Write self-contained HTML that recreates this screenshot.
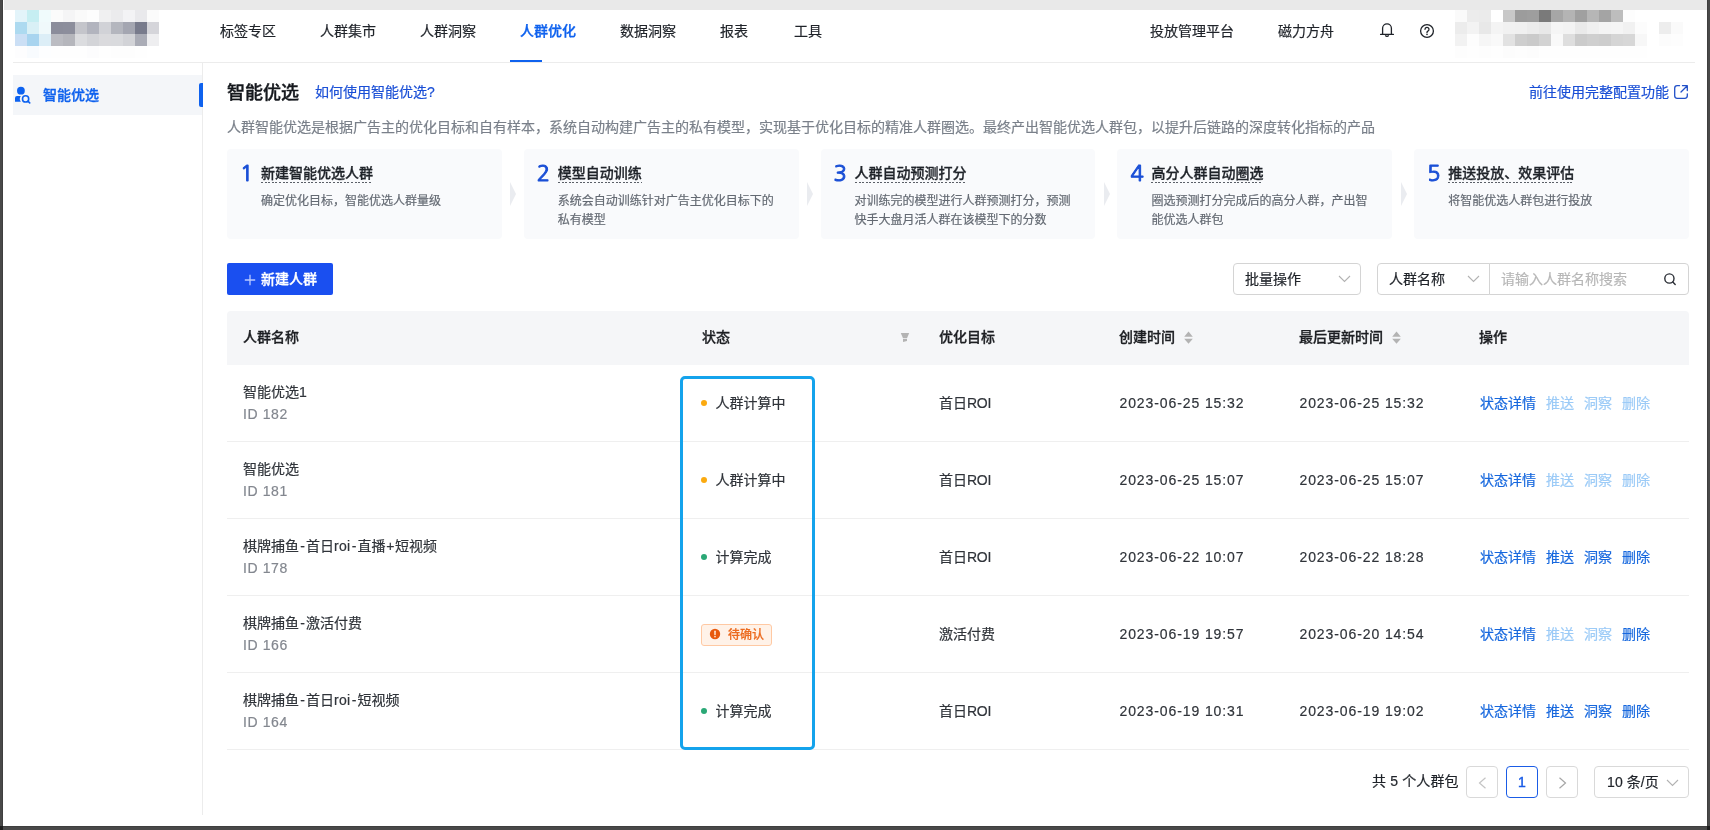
<!DOCTYPE html>
<html lang="zh-CN">
<head>
<meta charset="utf-8">
<title>智能优选</title>
<style>
*{box-sizing:border-box;margin:0;padding:0}
html,body{width:1710px;height:830px;overflow:hidden;background:#fff}
body{position:relative;font-family:"Liberation Sans","Noto Sans CJK SC",sans-serif;font-size:14px;color:#1f2329;-webkit-text-stroke-width:.2px}
.abs{position:absolute}
.t{position:absolute;white-space:nowrap;line-height:20px;height:20px}
.frame-l{left:0;top:0;width:3px;height:830px;background:linear-gradient(90deg,#494949 0,#494949 2px,#3f3f3f 2px,#3f3f3f 3px)}
.frame-r{left:1707px;top:0;width:3px;height:830px;background:linear-gradient(90deg,#3f3f3f 0,#3f3f3f 1px,#494949 1px,#494949 3px)}
.frame-b{left:0;top:826px;width:1710px;height:4px;background:linear-gradient(180deg,#3f3f3f 0,#3f3f3f 1px,#494949 1px,#494949 4px)}
.frame-c{top:826px;width:3px;height:4px;background:#1e1e1e}
.frame-t{left:4px;top:0;width:1703px;height:10px;background:#e9e9e9}
.hline{left:13px;top:62px;width:1682px;height:1px;background:#ececec}
.nav{top:21px;font-size:14px;color:#1f2329}
.nav.on{color:#0f62ee;font-weight:500;-webkit-text-stroke-width:.3px}
.px{position:absolute;width:12px;height:12px}
.side-item{left:13px;top:75px;width:189px;height:40px;background:#f4f6f9}
.side-line{left:202px;top:63px;width:1px;height:752px;background:#ececec}
.blue{color:#0f62ee}
.sb{font-weight:500;-webkit-text-stroke-width:.3px}
.card{position:absolute;top:149px;width:274.800px;height:90px;background:#f9fafc;border-radius:4px}
.card .n{position:absolute;left:13px;top:11px;font-family:"NanumGothic","Liberation Sans",sans-serif;-webkit-text-stroke:1px #1a4fd6;font-size:22px;line-height:26px;color:#1a4fd6}
.card .h{position:absolute;left:34px;top:14px;font-size:14px;line-height:20px;height:20px;font-weight:500;-webkit-text-stroke-width:.3px;color:#1f2329;white-space:nowrap;background:repeating-linear-gradient(90deg,#5b6068 0,#5b6068 2px,transparent 2px,transparent 3.600px) left bottom/100% 1px no-repeat}
.card .d{position:absolute;left:34px;top:43px;width:226px;font-size:12px;line-height:19px;color:#646a73}
.arrow{position:absolute;top:182px;width:0;height:0;border-top:12px solid transparent;border-bottom:12px solid transparent;border-left:6px solid #eaecf0}
.btn{left:227px;top:263px;width:106px;height:32px;background:#1a4ff0;border-radius:2px;color:#fff;font-weight:500;-webkit-text-stroke-width:.3px}
.sel{position:absolute;top:263px;height:32px;border:1px solid #d4d4d4;border-radius:4px;background:#fff}
.th{left:227px;top:311px;width:1462px;height:54px;background:#f5f6f8;border-radius:4px 4px 0 0}
.th .t{top:16px;font-weight:500;color:#1d1f23;-webkit-text-stroke-width:.3px}
.row{position:absolute;left:227px;width:1462px;height:77px;border-bottom:1px solid #efefef}
.row .t{color:#30343a}
.row .nm{left:16px;top:17px}
.row .id{left:16px;top:39px;color:#83878f;letter-spacing:.6px}
.row .st{left:488.500px;top:28px}
.row .dot{position:absolute;left:474px;top:35px;width:6px;height:6px;border-radius:50%}
.row .go{left:712px;top:28px}
.row .c1{left:892.500px;top:28px;letter-spacing:.9px}
.row .c2{left:1072.500px;top:28px;letter-spacing:.9px}
.row .a{top:28px;color:#1768de}
.row .a.dis{color:#9ccbf7}
.hy{margin:0 1.200px}.lt{letter-spacing:.3px}.pl{margin:0 .6px}.roi{letter-spacing:-.3px}
.hl{left:680px;top:376px;width:134.500px;height:374px;border:3px solid #14a3ec;border-radius:5px}
.pg{position:absolute;top:766px;width:32px;height:32px;border:1px solid #d9d9d9;border-radius:4px;background:#fff}
</style>
</head>
<body><div id="app" style="position:absolute;left:0;top:0;width:1710px;height:830px;will-change:transform">
<div class="abs frame-t"></div>
<div class="abs hline"></div>
<!-- pixelated logo / user -->
<div aria-hidden="true"><i class="px" style="left:15px;top:10px;background:#e3f4fa"></i><i class="px" style="left:27px;top:10px;background:#c6eef2"></i><i class="px" style="left:39px;top:10px;background:#f0fbfc"></i><i class="px" style="left:51px;top:10px;background:#fbfbfb"></i><i class="px" style="left:63px;top:10px;background:#f5f5f6"></i><i class="px" style="left:75px;top:10px;background:#fafafa"></i><i class="px" style="left:87px;top:10px;background:#fdfdfd"></i><i class="px" style="left:99px;top:10px;background:#f0f0f1"></i><i class="px" style="left:111px;top:10px;background:#ebebed"></i><i class="px" style="left:123px;top:10px;background:#f3f3f5"></i><i class="px" style="left:135px;top:10px;background:#e9e9ec"></i><i class="px" style="left:147px;top:10px;background:#fbfbfb"></i><i class="px" style="left:15px;top:22px;background:#addaf0"></i><i class="px" style="left:27px;top:22px;background:#d9f0f6"></i><i class="px" style="left:39px;top:22px;background:#f0f9fb"></i><i class="px" style="left:51px;top:22px;background:#8b8d9b"></i><i class="px" style="left:63px;top:22px;background:#8c8e9c"></i><i class="px" style="left:75px;top:22px;background:#c4c5cb"></i><i class="px" style="left:87px;top:22px;background:#b2b4be"></i><i class="px" style="left:99px;top:22px;background:#d1d2d7"></i><i class="px" style="left:111px;top:22px;background:#b4b6be"></i><i class="px" style="left:123px;top:22px;background:#a4a6b1"></i><i class="px" style="left:135px;top:22px;background:#787b8c"></i><i class="px" style="left:147px;top:22px;background:#d5d5da"></i><i class="px" style="left:15px;top:34px;background:#cbdff5"></i><i class="px" style="left:27px;top:34px;background:#a8d4ef"></i><i class="px" style="left:39px;top:34px;background:#dceef7"></i><i class="px" style="left:51px;top:34px;background:#bbbcc2"></i><i class="px" style="left:63px;top:34px;background:#b5b6bc"></i><i class="px" style="left:75px;top:34px;background:#dbdcdf"></i><i class="px" style="left:87px;top:34px;background:#d3d4d8"></i><i class="px" style="left:99px;top:34px;background:#dadadd"></i><i class="px" style="left:111px;top:34px;background:#d9dadd"></i><i class="px" style="left:123px;top:34px;background:#d2d3d7"></i><i class="px" style="left:135px;top:34px;background:#aaacb6"></i><i class="px" style="left:147px;top:34px;background:#eeeef0"></i><i class="px" style="left:15px;top:46px;background:#fdfdfe"></i><i class="px" style="left:27px;top:46px;background:#f8fbfe"></i><i class="px" style="left:39px;top:46px;background:#fdfeff"></i><i class="px" style="left:51px;top:46px;background:#fefefe"></i><i class="px" style="left:63px;top:46px;background:#fefefe"></i><i class="px" style="left:75px;top:46px;background:#fefefe"></i><i class="px" style="left:87px;top:46px;background:#fcfcfd"></i><i class="px" style="left:99px;top:46px;background:#fefefe"></i><i class="px" style="left:111px;top:46px;background:#fdfdfd"></i><i class="px" style="left:123px;top:46px;background:#fdfdfd"></i><i class="px" style="left:135px;top:46px;background:#fefefe"></i><i class="px" style="left:1455px;top:10px;background:#fafafa"></i><i class="px" style="left:1467px;top:10px;background:#ececec"></i><i class="px" style="left:1479px;top:10px;background:#ebebeb"></i><i class="px" style="left:1503px;top:10px;background:#c8c8c8"></i><i class="px" style="left:1515px;top:10px;background:#9c9c9c"></i><i class="px" style="left:1527px;top:10px;background:#9e9e9e"></i><i class="px" style="left:1539px;top:10px;background:#7a7a7a"></i><i class="px" style="left:1551px;top:10px;background:#a6a6a6"></i><i class="px" style="left:1563px;top:10px;background:#b4b4b4"></i><i class="px" style="left:1575px;top:10px;background:#a0a0a0"></i><i class="px" style="left:1587px;top:10px;background:#b6b6b6"></i><i class="px" style="left:1599px;top:10px;background:#a4a4a4"></i><i class="px" style="left:1611px;top:10px;background:#bdbdbd"></i><i class="px" style="left:1623px;top:10px;background:#fdfdfd"></i><i class="px" style="left:1455px;top:22px;background:#ececec"></i><i class="px" style="left:1467px;top:22px;background:#f3f3f3"></i><i class="px" style="left:1479px;top:22px;background:#e8e8e8"></i><i class="px" style="left:1491px;top:22px;background:#f4f4f4"></i><i class="px" style="left:1503px;top:22px;background:#f1f1f1"></i><i class="px" style="left:1515px;top:22px;background:#f0f0f0"></i><i class="px" style="left:1527px;top:22px;background:#ececec"></i><i class="px" style="left:1539px;top:22px;background:#e8e8e8"></i><i class="px" style="left:1551px;top:22px;background:#f5f5f5"></i><i class="px" style="left:1563px;top:22px;background:#f3f3f3"></i><i class="px" style="left:1575px;top:22px;background:#eaeaea"></i><i class="px" style="left:1587px;top:22px;background:#f0f0f0"></i><i class="px" style="left:1599px;top:22px;background:#f4f4f4"></i><i class="px" style="left:1611px;top:22px;background:#f5f5f5"></i><i class="px" style="left:1623px;top:22px;background:#f1f1f1"></i><i class="px" style="left:1635px;top:22px;background:#fcfcfc"></i><i class="px" style="left:1659px;top:22px;background:#ededed"></i><i class="px" style="left:1671px;top:22px;background:#fafafa"></i><i class="px" style="left:1455px;top:34px;background:#f2f2f2"></i><i class="px" style="left:1467px;top:34px;background:#fdfdfd"></i><i class="px" style="left:1479px;top:34px;background:#f6f6f6"></i><i class="px" style="left:1491px;top:34px;background:#f9f9f9"></i><i class="px" style="left:1503px;top:34px;background:#e2e2e2"></i><i class="px" style="left:1515px;top:34px;background:#cecece"></i><i class="px" style="left:1527px;top:34px;background:#cacaca"></i><i class="px" style="left:1539px;top:34px;background:#d3d3d3"></i><i class="px" style="left:1551px;top:34px;background:#f9f9f9"></i><i class="px" style="left:1563px;top:34px;background:#dedede"></i><i class="px" style="left:1575px;top:34px;background:#cbcbcb"></i><i class="px" style="left:1587px;top:34px;background:#cfcfcf"></i><i class="px" style="left:1599px;top:34px;background:#cdcdcd"></i><i class="px" style="left:1611px;top:34px;background:#d5d5d5"></i><i class="px" style="left:1623px;top:34px;background:#d7d7d7"></i><i class="px" style="left:1635px;top:34px;background:#f7f7f7"></i><i class="px" style="left:1659px;top:34px;background:#fcfcfc"></i><i class="px" style="left:1671px;top:34px;background:#fdfdfd"></i><i class="px" style="left:1455px;top:46px;background:#fdfdfd"></i><i class="px" style="left:1467px;top:46px;background:#fefefe"></i><i class="px" style="left:1479px;top:46px;background:#fdfdfd"></i><i class="px" style="left:1491px;top:46px;background:#fefefe"></i><i class="px" style="left:1503px;top:46px;background:#fcfcfc"></i><i class="px" style="left:1515px;top:46px;background:#fdfdfd"></i><i class="px" style="left:1527px;top:46px;background:#fcfcfc"></i><i class="px" style="left:1539px;top:46px;background:#fefefe"></i><i class="px" style="left:1551px;top:46px;background:#fefefe"></i><i class="px" style="left:1563px;top:46px;background:#fefefe"></i><i class="px" style="left:1575px;top:46px;background:#fefefe"></i><i class="px" style="left:1587px;top:46px;background:#fefefe"></i><i class="px" style="left:1599px;top:46px;background:#fefefe"></i><i class="px" style="left:1611px;top:46px;background:#fefefe"></i><i class="px" style="left:1623px;top:46px;background:#fefefe"></i><i class="px" style="left:1635px;top:46px;background:#fefefe"></i></div>
<!-- nav -->
<div class="t nav" style="left:220px">标签专区</div>
<div class="t nav" style="left:320px">人群集市</div>
<div class="t nav" style="left:420px">人群洞察</div>
<div class="t nav on" style="left:520px">人群优化</div>
<div class="t nav" style="left:620px">数据洞察</div>
<div class="t nav" style="left:720px">报表</div>
<div class="t nav" style="left:794px">工具</div>
<div class="abs" style="left:510px;top:60px;width:32px;height:2px;background:#0f62ee"></div>
<div class="t nav" style="left:1150px">投放管理平台</div>
<div class="t nav" style="left:1278px">磁力方舟</div>
<!-- sidebar -->
<div class="abs side-line"></div>
<div class="abs side-item"></div>
<div class="abs" style="left:199px;top:83px;width:4px;height:24px;background:#0f62ee;border-radius:2px 0 0 2px"></div>
<div class="t blue sb" style="left:43px;top:85px">智能优选</div>
<!-- title -->
<div class="t" style="left:227px;top:80px;font-size:18px;line-height:26px;height:26px;font-weight:500;-webkit-text-stroke-width:.4px;color:#15181d">智能优选</div>
<div class="t" style="left:315px;top:82px;color:#1a4fd6">如何使用智能优选?</div>
<div class="t" style="left:1529px;top:82px;color:#1a4fd6">前往使用完整配置功能</div>
<div class="t" style="left:227px;top:117px;color:#7a808a">人群智能优选是根据广告主的优化目标和自有样本，系统自动构建广告主的私有模型，实现基于优化目标的精准人群圈选。最终产出智能优选人群包，以提升后链路的深度转化指标的产品</div>
<!-- steps -->
<div class="card" style="left:227px"><span class="n">1</span><span class="h">新建智能优选人群</span><div class="d">确定优化目标，智能优选人群量级</div></div>
<div class="card" style="left:523.800px"><span class="n">2</span><span class="h">模型自动训练</span><div class="d">系统会自动训练针对广告主优化目标下的私有模型</div></div>
<div class="card" style="left:820.600px"><span class="n">3</span><span class="h">人群自动预测打分</span><div class="d">对训练完的模型进行人群预测打分，预测快手大盘月活人群在该模型下的分数</div></div>
<div class="card" style="left:1117.400px"><span class="n">4</span><span class="h">高分人群自动圈选</span><div class="d">圈选预测打分完成后的高分人群，产出智能优选人群包</div></div>
<div class="card" style="left:1414.200px"><span class="n">5</span><span class="h">推送投放、效果评估</span><div class="d">将智能优选人群包进行投放</div></div>
<div class="arrow" style="left:510px"></div>
<div class="arrow" style="left:807px"></div>
<div class="arrow" style="left:1103.800px"></div>
<div class="arrow" style="left:1400.600px"></div>
<!-- toolbar -->
<div class="abs btn"><span class="t" style="left:34px;top:6px">新建人群</span></div>
<div class="sel" style="left:1233px;width:128px"><span class="t" style="left:11px;top:5px">批量操作</span></div>
<div class="sel" style="left:1377px;width:113px;border-radius:4px 0 0 4px"><span class="t" style="left:11px;top:5px">人群名称</span></div>
<div class="sel" style="left:1489px;width:200px;border-radius:0 4px 4px 0"><span class="t" style="left:11px;top:5px;color:#b7b7b7">请输入人群名称搜索</span></div>
<!-- table head -->
<div class="abs th">
<span class="t" style="left:16px">人群名称</span>
<span class="t" style="left:475px">状态</span>
<span class="t" style="left:712px">优化目标</span>
<span class="t" style="left:892px">创建时间</span>
<span class="t" style="left:1072px">最后更新时间</span>
<span class="t" style="left:1252px">操作</span>
</div>
<!-- rows -->
<div class="row" style="top:365px"><span class="t nm">智能优选1</span><span class="t id">ID 182</span><i class="dot" style="background:#fbaa10"></i><span class="t st">人群计算中</span><span class="t go">首日<span class="roi">ROI</span></span><span class="t c1">2023-06-25 15:32</span><span class="t c2">2023-06-25 15:32</span><span class="t a" style="left:1253px">状态详情</span><span class="t a dis" style="left:1319px">推送</span><span class="t a dis" style="left:1357px">洞察</span><span class="t a dis" style="left:1395px">删除</span></div>
<div class="row" style="top:442px"><span class="t nm">智能优选</span><span class="t id">ID 181</span><i class="dot" style="background:#fbaa10"></i><span class="t st">人群计算中</span><span class="t go">首日<span class="roi">ROI</span></span><span class="t c1">2023-06-25 15:07</span><span class="t c2">2023-06-25 15:07</span><span class="t a" style="left:1253px">状态详情</span><span class="t a dis" style="left:1319px">推送</span><span class="t a dis" style="left:1357px">洞察</span><span class="t a dis" style="left:1395px">删除</span></div>
<div class="row" style="top:519px"><span class="t nm">棋牌捕鱼<span class="hy">-</span>首日<span class="lt">roi</span><span class="hy">-</span>直播<span class="pl">+</span>短视频</span><span class="t id">ID 178</span><i class="dot" style="background:#2aa876"></i><span class="t st">计算完成</span><span class="t go">首日<span class="roi">ROI</span></span><span class="t c1">2023-06-22 10:07</span><span class="t c2">2023-06-22 18:28</span><span class="t a" style="left:1253px">状态详情</span><span class="t a" style="left:1319px">推送</span><span class="t a" style="left:1357px">洞察</span><span class="t a" style="left:1395px">删除</span></div>
<div class="row" style="top:596px"><span class="t nm">棋牌捕鱼<span class="hy">-</span>激活付费</span><span class="t id">ID 166</span><span class="abs" style="left:474px;top:28px;width:71px;height:22px;background:#fff2e8;border:1px solid #ffc9a3;border-radius:3px"></span><span class="t" style="left:501px;top:29px;font-size:12px;font-weight:500;color:#ec6a1e">待确认</span><span class="t go">激活付费</span><span class="t c1">2023-06-19 19:57</span><span class="t c2">2023-06-20 14:54</span><span class="t a" style="left:1253px">状态详情</span><span class="t a dis" style="left:1319px">推送</span><span class="t a dis" style="left:1357px">洞察</span><span class="t a" style="left:1395px">删除</span></div>
<div class="row" style="top:673px"><span class="t nm">棋牌捕鱼<span class="hy">-</span>首日<span class="lt">roi</span><span class="hy">-</span>短视频</span><span class="t id">ID 164</span><i class="dot" style="background:#2aa876"></i><span class="t st">计算完成</span><span class="t go">首日<span class="roi">ROI</span></span><span class="t c1">2023-06-19 10:31</span><span class="t c2">2023-06-19 19:02</span><span class="t a" style="left:1253px">状态详情</span><span class="t a" style="left:1319px">推送</span><span class="t a" style="left:1357px">洞察</span><span class="t a" style="left:1395px">删除</span></div>
<div class="abs hl"></div>
<!-- pagination -->
<div class="t" style="left:1372px;top:771px;letter-spacing:.15px">共 5 个人群包</div>
<div class="pg" style="left:1466px"></div>
<div class="pg" style="left:1506px;border-color:#1a5ce6"><span class="t" style="left:0;width:30px;text-align:center;top:5px;color:#1a5ce6;-webkit-text-stroke-width:.45px">1</span></div>
<div class="pg" style="left:1546px"></div>
<div class="pg" style="left:1594px;width:95px"><span class="t" style="left:12px;top:5px;letter-spacing:.1px">10 条/页</span></div>
<!-- icons -->
<svg class="abs" style="left:1378px;top:20px" width="18" height="20" viewBox="0 0 18 20" fill="none" stroke="#1f2329" stroke-width="1.3"><path d="M4.6 14.4V8.2a4.4 4.4 0 0 1 8.8 0v6.2"/><path d="M2.600 14.4h12.800" stroke-linecap="round"/><path d="M7.4 15.2a1.7 1.7 0 0 0 3.2 0" /></svg>
<svg class="abs" style="left:1419px;top:23px" width="16" height="16" viewBox="0 0 16 16" fill="none" stroke="#1f2329" stroke-width="1.3"><circle cx="8" cy="8" r="6.4"/><path d="M6 6.3a2 2 0 1 1 2.9 1.8c-.6.3-.9.7-.9 1.300v.4" stroke-linecap="round"/><circle cx="8" cy="11.500" r=".5" fill="#1f2329" stroke-width=".6"/></svg>
<svg class="abs" style="left:14px;top:86px" width="18" height="18" viewBox="0 0 18 18"><circle cx="6.900" cy="4.700" r="3.900" fill="#0d62f0"/><path d="M1 15.800V12a2 2 0 0 1 2-2h3.800a5 5 0 0 0 0 5.800z" fill="#0d62f0"/><circle cx="11.600" cy="12.900" r="3.100" fill="none" stroke="#0d62f0" stroke-width="1.600"/><path d="M13.900 15.200l1.800 1.700" stroke="#0d62f0" stroke-width="1.600" stroke-linecap="round"/></svg>
<svg class="abs" style="left:1673px;top:84px" width="16" height="16" viewBox="0 0 16 16" fill="none" stroke="#2150c8" stroke-width="1.300" stroke-linecap="round" stroke-linejoin="round"><path d="M6.500 1.700H4.200a2.500 2.500 0 0 0-2.500 2.500v7.600a2.500 2.500 0 0 0 2.500 2.500h7.600a2.500 2.500 0 0 0 2.500-2.500V9.800"/><path d="M8 8l6.300-6.300M9.500 1.700h4.800v4.800"/></svg>
<svg class="abs" style="left:244px;top:274px" width="12" height="12" viewBox="0 0 12 12" stroke="#b9caff" stroke-width="1.300"><path d="M6 .8v10.400M.8 6h10.400"/></svg>
<svg class="abs" style="left:1338px;top:275px" width="13" height="8" viewBox="0 0 13 8" fill="none" stroke="#b2b2b2" stroke-width="1.100"><path d="M1 1l5.500 5.500L12 1"/></svg>
<svg class="abs" style="left:1467px;top:275px" width="13" height="8" viewBox="0 0 13 8" fill="none" stroke="#b2b2b2" stroke-width="1.100"><path d="M1 1l5.500 5.500L12 1"/></svg>
<svg class="abs" style="left:1663px;top:272px" width="14" height="14" viewBox="0 0 14 14" fill="none" stroke="#2b2f36" stroke-width="1.400" stroke-linecap="round"><circle cx="6.400" cy="6.500" r="4.600"/><path d="M9.800 10l2.400 2.500"/></svg>
<svg class="abs" style="left:900px;top:332px" width="10" height="11" viewBox="0 0 10 11" fill="#b3b3b3"><path d="M.8 1h8.400L7 6.200H3z"/><path d="M3 7.100h4v1.900l-4 1.100z"/></svg>
<svg class="abs" style="left:1184px;top:331px" width="9" height="13" viewBox="0 0 9 13" fill="#b3b3b3"><path d="M4.500 .5L8.800 5.700H.2z"/><path d="M4.500 12.700L.2 7.700h8.600z"/></svg>
<svg class="abs" style="left:1392px;top:331px" width="9" height="13" viewBox="0 0 9 13" fill="#b3b3b3"><path d="M4.500 .5L8.800 5.700H.2z"/><path d="M4.500 12.700L.2 7.700h8.600z"/></svg>
<svg class="abs" style="left:709px;top:628px" width="12" height="12" viewBox="0 0 12 12"><circle cx="6" cy="6" r="5.200" fill="#e8590c"/><path d="M6 3.200v3.400" stroke="#ffe9d6" stroke-width="1.500" stroke-linecap="round"/><circle cx="6" cy="8.600" r=".85" fill="#ffe9d6"/></svg>
<svg class="abs" style="left:1478px;top:777px" width="9" height="12" viewBox="0 0 9 12" fill="none" stroke="#c4c4c4" stroke-width="1.200"><path d="M7.500 .8L1.500 6l6 5.200"/></svg>
<svg class="abs" style="left:1558px;top:777px" width="9" height="12" viewBox="0 0 9 12" fill="none" stroke="#a6a6a6" stroke-width="1.200"><path d="M1.500 .8L7.500 6l-6 5.200"/></svg>
<svg class="abs" style="left:1666px;top:779px" width="13" height="8" viewBox="0 0 13 8" fill="none" stroke="#b2b2b2" stroke-width="1.100"><path d="M1 1l5.500 5.500L12 1"/></svg>
<!-- frame -->
<div class="abs frame-l"></div><div class="abs frame-r"></div><div class="abs frame-b"></div><div class="abs frame-c" style="left:0"></div><div class="abs frame-c" style="left:1707px"></div>
</div></body>
</html>
